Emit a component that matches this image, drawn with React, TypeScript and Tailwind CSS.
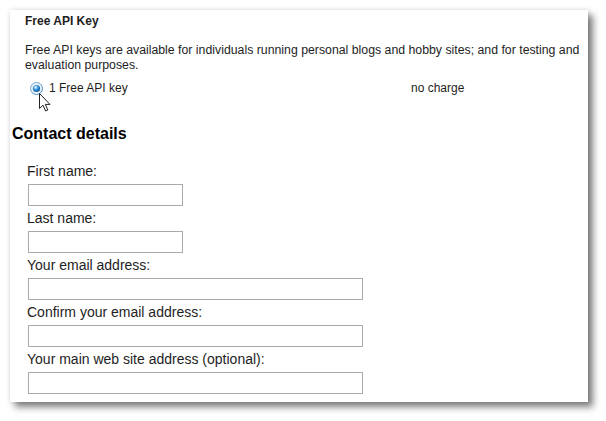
const fields = [
  { label: "First name:", wide: false },
  { label: "Last name:", wide: false },
  { label: "Your email address:", wide: true },
  { label: "Confirm your email address:", wide: true },
  { label: "Your main web site address (optional):", wide: true },
];

function Radio() {
  return (
    <svg width="13" height="13" viewBox="0 0 13 13" className="block">
      <defs>
        <radialGradient id="rb" cx="0.4" cy="0.35" r="0.7">
          <stop offset="0" stopColor="#bfe9ff" />
          <stop offset="0.5" stopColor="#2f8fd6" />
          <stop offset="1" stopColor="#0d4f8f" />
        </radialGradient>
        <linearGradient id="rr" x1="0" y1="0" x2="1" y2="1">
          <stop offset="0" stopColor="#8fb4d6" />
          <stop offset="1" stopColor="#3c7fb1" />
        </linearGradient>
      </defs>
      <circle cx="6.5" cy="6.5" r="6" fill="#e6f1fa" stroke="url(#rr)" strokeWidth="1" />
      <circle cx="6.5" cy="6.5" r="3.6" fill="url(#rb)" />
      <circle cx="5.6" cy="5.4" r="1.1" fill="#eaf8ff" opacity="0.8" />
    </svg>
  );
}

function Cursor() {
  return (
    <svg width="13" height="19" viewBox="0 0 13 19" className="block">
      <path
        d="M0.5 0.5 L0.5 15.5 L4 12.2 L6.6 18 L8.8 17 L6.3 11.4 L11 11.4 Z"
        fill="#fff"
        stroke="#222"
        strokeWidth="1"
        strokeLinejoin="round"
      />
    </svg>
  );
}

export default function App() {
  return (
    <div className="w-[606px] h-[421px] bg-white p-[10px] font-['Liberation_Sans',Arial,sans-serif] text-[#1e1e1e]">
      <div className="relative w-[578px] bg-white pb-[8px] shadow-[5px_5px_7px_rgba(0,0,0,0.5),0_0_5px_rgba(0,0,0,0.12)]">
        <div className="pt-[4px] pl-[15px] text-[12px] leading-[14px] font-bold">Free API Key</div>
        <p className="mt-[15px] pl-[15px] text-[12.3px] leading-[15px] whitespace-nowrap">
          Free API keys are available for individuals running personal blogs and hobby sites; and for testing and
          <br />
          evaluation purposes.
        </p>
        <div className="mt-[8px] flex items-center h-[15px] text-[12px] leading-[15px]">
          <div className="ml-[20px] w-[13px]">
            <Radio />
          </div>
          <span className="ml-[6px] w-[362px]">1 Free API key</span>
          <span>no charge</span>
        </div>
        <div className="absolute left-[29px] top-[83px]">
          <Cursor />
        </div>
        <h2 className="mt-[29px] pl-[2px] text-[16px] leading-[18px] font-bold text-black">Contact details</h2>
        <div className="mt-[19px] pl-[17px] flex flex-col">
          {fields.map((f) => (
            <div key={f.label} className="mb-[3px] last:mb-0">
              <div className="text-[14px] leading-[18px] mb-[4px]">{f.label}</div>
              <input
                type="text"
                className={`ml-[1px] block h-[22px] border border-[#a9a9ae] bg-white outline-none ${
                  f.wide ? "w-[335px]" : "w-[155px]"
                }`}
              />
            </div>
          ))}
        </div>
      </div>
    </div>
  );
}
